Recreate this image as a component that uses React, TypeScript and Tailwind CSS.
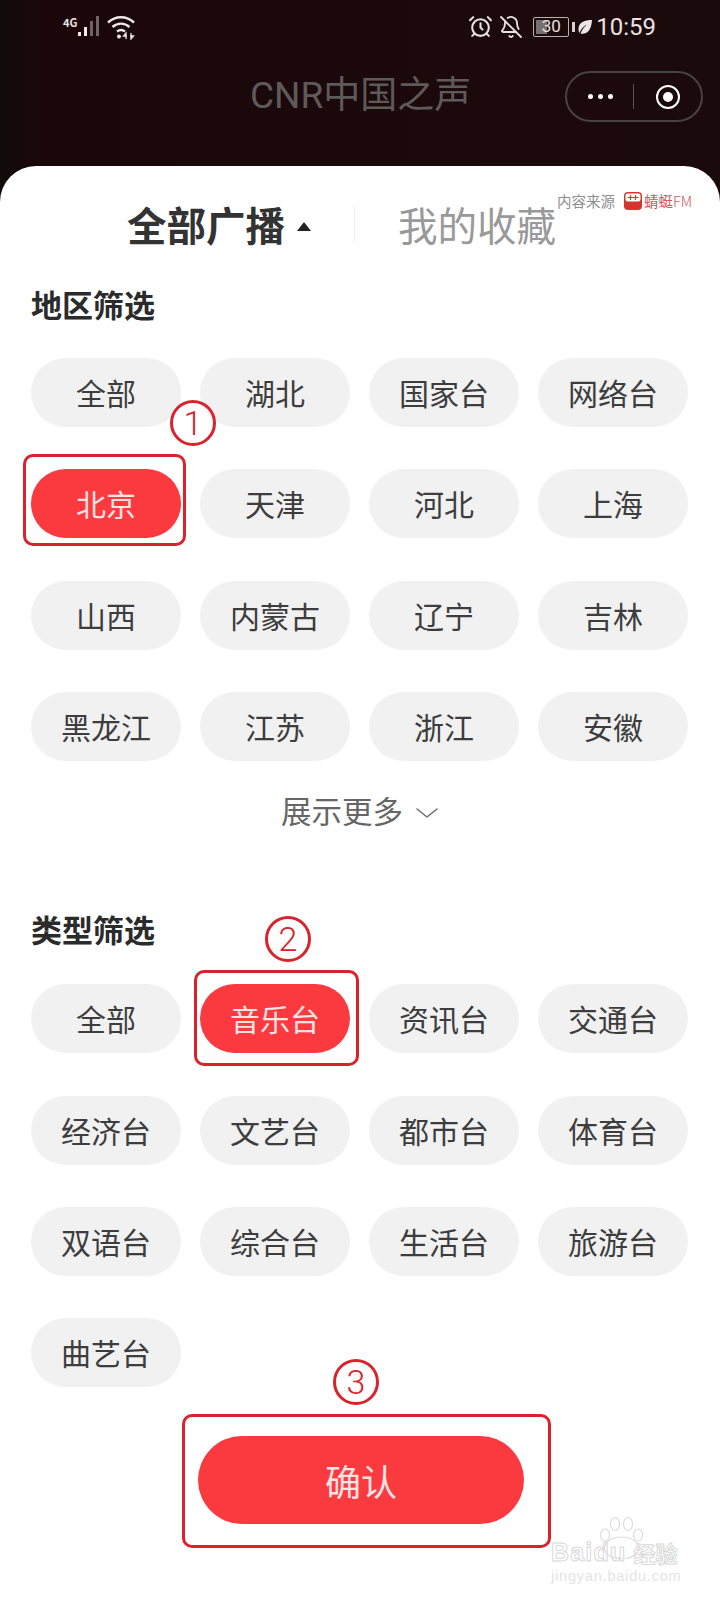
import { AlarmClock, BellOff, ChevronDown } from 'lucide-react';

const regions = ['全部', '湖北', '国家台', '网络台', '北京', '天津', '河北', '上海', '山西', '内蒙古', '辽宁', '吉林', '黑龙江', '江苏', '浙江', '安徽'];
const types = ['全部', '音乐台', '资讯台', '交通台', '经济台', '文艺台', '都市台', '体育台', '双语台', '综合台', '生活台', '旅游台', '曲艺台'];

function Pills({ items, active }: { items: string[]; active: string }) {
  return (
    <div className="grid grid-cols-[repeat(4,150px)] gap-x-[19px] gap-y-[42.4px] pl-[31px]">
      {items.map((name) => (
        <button
          key={name}
          className={
            name === active
              ? 'h-[69px] rounded-full bg-[#fb3a40] text-[30px] text-[#fde3e3]'
              : 'h-[69px] rounded-full bg-[#f1f1f1] text-[30px] text-[#3d3d3d]'
          }
        >
          {name}
        </button>
      ))}
    </div>
  );
}

function StatusBar() {
  return (
    <div className="flex h-[52px] items-center pl-[63px] pr-[64px] pt-[1px] text-[#e9e2e0]">
      <span className="mb-[9px] text-[11px] font-bold leading-none">4G</span>
      <svg width="24" height="24" viewBox="0 0 24 24" className="mt-[1px]">
        <rect x="1" y="17" width="3" height="4" fill="#efe9e7" />
        <rect x="7" y="12" width="3" height="9" fill="#efe9e7" />
        <rect x="13" y="6" width="3" height="15" fill="#6e6563" />
        <rect x="19" y="1" width="3" height="20" fill="#6e6563" />
      </svg>
      <svg width="30" height="26" viewBox="0 0 30 26" className="ml-[5px]" fill="none" stroke="#efe9e7" strokeWidth="2.4">
        <path d="M2 8.5C9.5 1.5 20.5 1.5 28 8.5" />
        <path d="M6.5 13C11.5 8.5 18.5 8.5 23.5 13" />
        <path d="M11 17.5C13.5 15.5 16.5 15.5 19 17.5" />
        <circle cx="13" cy="22.5" r="2" fill="#efe9e7" stroke="none" />
        <path d="M20 25l0-6l-2.5 3h3.500M25 19l0 6l2.500-3h-3.500" strokeWidth="1.300" />
      </svg>
      <div className="ml-auto flex items-center">
        <AlarmClock size={25} strokeWidth={2} />
        <BellOff size={24} strokeWidth={1.8} className="ml-[6px]" />
        <div className="relative ml-[10px] flex h-[20px] w-[36px] items-center justify-center rounded-[2px] border border-[#b9b1af] text-[17px] leading-none">
          <div className="absolute inset-y-[2px] left-[2px] w-[11px] bg-[#77706e]" />
          <span className="relative font-['Roboto',sans-serif]">30</span>
        </div>
        <div className="ml-[3px] h-[10px] w-[3px] bg-[#d8d2d0]" />
        <svg width="16" height="16" viewBox="0 0 16 16" className="ml-[2px]">
          <path d="M15 1C8 1 1.500 3 1.500 10c0 1.500.5 3 1 4C4 9.500 7 7 10 5.500 7.500 7.500 5 10.500 3.500 14.500 9 16 14.500 12 15 1z" fill="#ece6e4" />
        </svg>
        <span className="ml-[3px] font-['Roboto',sans-serif] text-[24px] leading-none">10:59</span>
      </div>
    </div>
  );
}

function TitleBar() {
  return (
    <div className="flex h-[114px] items-start">
      <span className="ml-[250px] mt-[22px] font-['Roboto','Noto_Sans_CJK_SC',sans-serif] text-[37px] leading-[44px] text-[#5e5a5a]">
        CNR中国之声
      </span>
      <div className="ml-auto mr-[17px] mt-[19px] flex h-[51px] w-[138px] items-center rounded-full border-2 border-[#4a4141]">
        <div className="ml-[21px] flex gap-[5px]">
          <span className="h-[5px] w-[5px] rounded-full bg-white" />
          <span className="h-[5px] w-[5px] rounded-full bg-white" />
          <span className="h-[5px] w-[5px] rounded-full bg-white" />
        </div>
        <div className="ml-[20px] h-[25px] w-px bg-[#5c5353]" />
        <div className="ml-[22px] flex h-[24px] w-[24px] items-center justify-center rounded-full border-2 border-white">
          <span className="h-[10px] w-[10px] rounded-full bg-white" />
        </div>
      </div>
    </div>
  );
}

function Tabs() {
  return (
    <div className="relative flex h-[48px] items-center pl-[127px]">
      <span className="text-[39.500px] font-bold leading-[48px] text-[#333333]">全部广播</span>
      <span className="ml-[12px] mt-[5px] h-0 w-0 border-x-[7px] border-b-[9px] border-x-transparent border-b-[#222222]" />
      <span className="ml-[43px] h-[36px] w-px bg-[#ececec]" />
      <span className="ml-[43px] text-[39.500px] leading-[48px] text-[#999999]">我的收藏</span>
      <div className="absolute left-[557px] top-[-9px] flex items-center">
        <span className="text-[14.500px] leading-[20px] text-[#8e8e8e]">内容来源</span>
        <svg width="18" height="18" viewBox="0 0 18 18" className="ml-[9px]">
          <rect width="18" height="18" rx="4" fill="#d5342f" />
          <rect x="1.500" y="1.500" width="15" height="8" rx="2" fill="#fff" />
          <path d="M6.500 3v5M11.500 3v5M3.500 5.500h11" stroke="#d5342f" strokeWidth="1.100" fill="none" />
        </svg>
        <span className="ml-[2px] text-[14.500px] leading-[20px] text-[#d2555a]">蜻蜓<span className="font-light">FM</span></span>
      </div>
    </div>
  );
}

function Heading({ children }: { children: string }) {
  return <h2 className="pl-[31px] text-[31px] font-bold leading-[40px] text-[#2b2b2b]">{children}</h2>;
}

function Marker({ label, className }: { label: string; className: string }) {
  return (
    <div className={`absolute flex h-[46px] w-[46px] items-center justify-center rounded-full border-[3px] border-[#d9222c] font-['Roboto',sans-serif] text-[34px] font-light leading-none text-[#d9222c] ${className}`}>
      {label}
    </div>
  );
}

function Watermark() {
  return (
    <div className="absolute left-[551px] top-[1518px]">
      <svg width="52" height="44" viewBox="0 0 52 44" className="absolute left-[46px] top-[-3px]" fill="none" stroke="#dddddd" strokeWidth="1.200">
        <ellipse cx="8" cy="20" rx="4.500" ry="6" />
        <ellipse cx="18" cy="9" rx="4.500" ry="6.500" />
        <ellipse cx="31" cy="9" rx="4.500" ry="6.500" />
        <ellipse cx="41" cy="20" rx="4.500" ry="6" />
        <ellipse cx="24.500" cy="33" rx="17" ry="11" />
      </svg>
      <div className="mt-[21px] flex items-center text-transparent [-webkit-text-stroke:1px_#d8d8d8]">
        <span className="font-['Liberation_Sans',sans-serif] text-[25px] font-bold leading-[26px] tracking-[1.2px]">Baidu</span>
        <span className="ml-[7px] text-[22px] font-bold leading-[26px]">经验</span>
      </div>
      <div className="mt-[2px] font-['Liberation_Sans',sans-serif] text-[14.500px] leading-[18px] tracking-[0.800px] text-[#e4e4e4]">jingyan.baidu.com</div>
    </div>
  );
}

export default function App() {
  return (
    <div className="relative h-[1600px] w-[720px] overflow-hidden bg-linear-to-r from-[#120b0b] via-[#1b070a] via-[6%] to-[#1b0a0c] font-['Noto_Sans_CJK_SC','Noto_Sans',sans-serif]">
      <StatusBar />
      <TitleBar />

      <div className="h-[1434px] rounded-t-[36px] bg-white pt-[34px]">
        <Tabs />

        <div className="mt-[36px]">
          <Heading>地区筛选</Heading>
        </div>
        <div className="mt-[34px]">
          <Pills items={regions} active="北京" />
        </div>

        <div className="mt-[30px] flex h-[40px] items-center pl-[281px] text-[30.500px] text-[#666666]">
          <span>展示更多</span>
          <ChevronDown size={32} strokeWidth={1} className="ml-[8px] mt-[3px] scale-x-125 text-[#777777]" />
        </div>

        <div className="mt-[78px]">
          <Heading>类型筛选</Heading>
        </div>
        <div className="mt-[35px]">
          <Pills items={types} active="音乐台" />
        </div>

        <button className="mx-auto mt-[49px] block h-[88px] w-[326px] translate-x-[1px] rounded-full bg-[#fb3a40] text-[36px] text-[#fde3e3]">
          确认
        </button>
      </div>

      {/* red annotations drawn over the screenshot */}
      <div className="absolute left-[23px] top-[454px] h-[92px] w-[163px] rounded-[10px] border-[3px] border-[#d9222c]" />
      <Marker label="1" className="left-[170px] top-[400px]" />
      <div className="absolute left-[194px] top-[970px] h-[96px] w-[165px] rounded-[10px] border-[3px] border-[#d9222c]" />
      <Marker label="2" className="left-[265px] top-[916px]" />
      <div className="absolute left-[182px] top-[1414px] h-[134px] w-[369px] rounded-[10px] border-[3px] border-[#d9222c]" />
      <Marker label="3" className="left-[333px] top-[1359px]" />

      <Watermark />
    </div>
  );
}
